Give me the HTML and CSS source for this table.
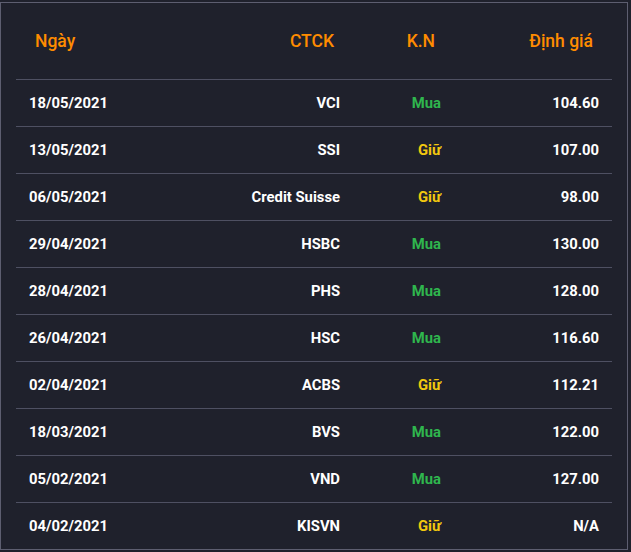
FILE: index.html
```html
<!DOCTYPE html>
<html lang="vi">
<head>
<meta charset="utf-8">
<link rel="stylesheet" href="styles.css">
</head>
<body>
<div class="box">
  <div class="grid">
    <div class="row head">
      <div class="c left">Ngày</div>
      <div class="c">CTCK</div>
      <div class="c">K.N</div>
      <div class="c">Định giá</div>
    </div>
    <div class="row"><div class="c left">18/05/2021</div><div class="c">VCI</div><div class="c buy">Mua</div><div class="c">104.60</div></div>
    <div class="row"><div class="c left">13/05/2021</div><div class="c">SSI</div><div class="c hold">Giữ</div><div class="c">107.00</div></div>
    <div class="row"><div class="c left">06/05/2021</div><div class="c">Credit Suisse</div><div class="c hold">Giữ</div><div class="c">98.00</div></div>
    <div class="row"><div class="c left">29/04/2021</div><div class="c">HSBC</div><div class="c buy">Mua</div><div class="c">130.00</div></div>
    <div class="row"><div class="c left">28/04/2021</div><div class="c">PHS</div><div class="c buy">Mua</div><div class="c">128.00</div></div>
    <div class="row"><div class="c left">26/04/2021</div><div class="c">HSC</div><div class="c buy">Mua</div><div class="c">116.60</div></div>
    <div class="row"><div class="c left">02/04/2021</div><div class="c">ACBS</div><div class="c hold">Giữ</div><div class="c">112.21</div></div>
    <div class="row"><div class="c left">18/03/2021</div><div class="c">BVS</div><div class="c buy">Mua</div><div class="c">122.00</div></div>
    <div class="row"><div class="c left">05/02/2021</div><div class="c">VND</div><div class="c buy">Mua</div><div class="c">127.00</div></div>
    <div class="row"><div class="c left">04/02/2021</div><div class="c">KISVN</div><div class="c hold">Giữ</div><div class="c">N/A</div></div>
  </div>
</div>
</body>
</html>
```

FILE: styles.css
```css
html, body {
  margin: 0;
  padding: 0;
  background: #1f212c;
}
body {
  padding-top: 2px;
  font-family: Roboto, "Liberation Sans", sans-serif;
}
.box {
  width: 628px;
  height: 548px;
  box-sizing: border-box;
  border: 1px solid #5d5e70;
  background: #1f212c;
  padding: 0 15px;
}
.grid {
  display: flex;
  flex-direction: column;
}
.row {
  display: grid;
  grid-template-columns: 170px 167px 101px 158px;
  height: 46px;
  border-bottom: 1px solid #4e5062;
  align-items: center;
  color: #ffffff;
  font-weight: 700;
  font-size: 14.8px;
}
.row:last-child {
  border-bottom: none;
}
.row.head {
  height: 76px;
  color: #ff8c00;
  font-weight: 500;
  font-size: 17.5px;
}
.c {
  padding: 0 13px;
  text-align: right;
  white-space: nowrap;
}
.head .c {
  padding: 0 19px;
}
.c.left {
  text-align: left;
}
.buy {
  color: #2fb64e;
}
.hold {
  color: #f2c80f;
}
```
